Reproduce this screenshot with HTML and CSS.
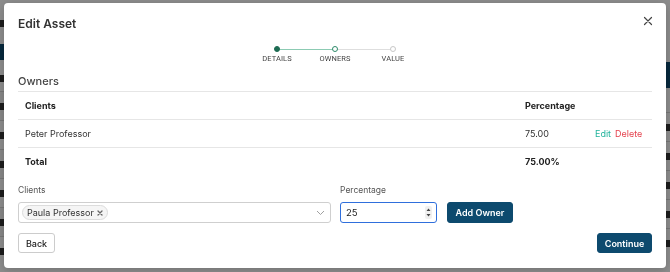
FILE: index.html
```html
<!DOCTYPE html>
<html lang="en">
<head>
<meta charset="utf-8">
<title>Edit Asset</title>
<link rel="stylesheet" href="styles.css">
</head>
<body>
<div class="page">
  <div class="page-left">
    <div class="pl-title"><span class="ink"></span></div>
    <div class="pl-btn"></div>
    <div class="pl-text"><span class="ink"></span></div>
    <div class="pl-rows">
      <div class="pl-row"><span class="ink"></span></div>
      <div class="pl-row"><span class="ink"></span></div>
      <div class="pl-row"><span class="ink"></span></div>
      <div class="pl-row"><span class="ink"></span></div>
      <div class="pl-row"><span class="ink"></span></div>
      <div class="pl-row"><span class="ink"></span></div>
    </div>
  </div>
  <div class="page-right">
    <div class="pr-btn"></div>
    <div class="pr-rows">
      <div class="pr-row"><span class="ink"></span></div>
      <div class="pr-row"><span class="ink"></span></div>
      <div class="pr-row"><span class="ink"></span></div>
      <div class="pr-row"><span class="ink"></span></div>
      <div class="pr-row"><span class="ink"></span></div>
    </div>
  </div>
</div>

<div class="backdrop">
  <div class="modal">
    <div class="modal-head">
      <div class="title">Edit Asset</div>
      <div class="close">
        <svg width="10" height="10" viewBox="0 0 10 10"><path d="M1.5 1.5 L8.5 8.5 M8.5 1.5 L1.5 8.5" stroke="#444" stroke-width="1.2" stroke-linecap="round" fill="none"/></svg>
      </div>
    </div>

    <div class="stepper">
      <div class="step step-done">
        <span class="dot dot-done"></span>
        <span class="step-label">DETAILS</span>
      </div>
      <div class="step step-current">
        <span class="dot dot-current"></span>
        <span class="step-label">OWNERS</span>
      </div>
      <div class="step step-todo">
        <span class="dot dot-todo"></span>
        <span class="step-label">VALUE</span>
      </div>
    </div>

    <div class="section-title">Owners</div>

    <div class="table">
      <div class="row row-head">
        <div class="cell">Clients</div>
        <div class="cell">Percentage</div>
        <div class="cell"></div>
      </div>
      <div class="row">
        <div class="cell">Peter Professor</div>
        <div class="cell">75.00</div>
        <div class="cell actions"><span class="edit">Edit</span><span class="delete">Delete</span></div>
      </div>
      <div class="row row-total">
        <div class="cell">Total</div>
        <div class="cell">75.00%</div>
        <div class="cell"></div>
      </div>
    </div>

    <div class="form-row">
      <div class="field field-clients">
        <label class="label">Clients</label>
        <div class="select">
          <span class="chip">Paula Professor
            <svg width="6" height="6" viewBox="0 0 6 6"><path d="M1 1 L5 5 M5 1 L1 5" stroke="#666" stroke-width="1.3" stroke-linecap="round"/></svg>
          </span>
          <svg class="chevron" width="9" height="6" viewBox="0 0 9 6"><path d="M1 1 L4.5 4.5 L8 1" stroke="#a0a0a0" stroke-width="1" fill="none"/></svg>
        </div>
      </div>
      <div class="field field-pct">
        <label class="label">Percentage</label>
        <div class="num">
          <input class="num-input" type="text" value="25">
          <span class="spinner">
            <svg width="7" height="13" viewBox="0 0 7 13"><path d="M3.5 2.5 L5.5 5 L1.5 5 Z M1.5 8 L5.5 8 L3.5 10.5 Z" fill="#444"/></svg>
          </span>
        </div>
      </div>
      <button class="btn btn-primary btn-add">Add Owner</button>
    </div>

    <div class="footer">
      <button class="btn btn-light">Back</button>
      <button class="btn btn-primary">Continue</button>
    </div>
  </div>
</div>
</body>
</html>
```

FILE: styles.css
```css
html, body {
  margin: 0;
  padding: 0;
}

body {
  width: 670px;
  height: 272px;
  overflow: hidden;
  background: #ffffff;
  font-family: Inter, "Noto Sans", sans-serif;
  color: #333;
}

/* ---------- page behind the dialog ---------- */
.page {
  display: flex;
  justify-content: space-between;
  height: 272px;
}

.ink {
  display: block;
  width: 100%;
  height: 7px;
  background: #333;
}

.page-left {
  width: 26px;
  margin-left: -22px;
  display: flex;
  flex-direction: column;
}

.pl-title {
  margin-top: 20px;
  height: 9px;
}

.pl-btn {
  margin-top: 15px;
  height: 16px;
  background: #0d4a6e;
}

.pl-text {
  margin-top: 15px;
  height: 8px;
}

.pl-rows {
  margin-top: 8px;
}

.pl-row {
  height: 29px;
  box-sizing: border-box;
  padding-top: 11px;
  border-top: 1px solid #d8d8d8;
  background: #f6f6f6;
}

.pl-row:nth-child(even) {
  background: #ffffff;
}

.page-right {
  width: 26px;
  margin-right: -20px;
  display: flex;
  flex-direction: column;
}

.pr-btn {
  margin-top: 62px;
  height: 26px;
  background: #0d4a6e;
}

.pr-rows {
  margin-top: 24px;
}

.pr-row {
  height: 29px;
  box-sizing: border-box;
  padding-top: 11px;
  border-top: 1px solid #d8d8d8;
}

/* ---------- backdrop and dialog ---------- */
.backdrop {
  position: fixed;
  inset: 0;
  background: rgba(0, 0, 0, 0.45);
  display: flex;
  justify-content: center;
  align-items: flex-start;
  padding-top: 3px;
}

.modal {
  width: 662px;
  height: 265px;
  box-sizing: border-box;
  background: #ffffff;
  border-radius: 4px;
  padding: 14px 14px 15px;
  display: flex;
  flex-direction: column;
  box-shadow: 0 2px 10px rgba(0, 0, 0, 0.2);
}

.modal-head {
  display: flex;
  justify-content: space-between;
  align-items: flex-start;
  height: 14px;
}

.title {
  font-size: 12px;
  font-weight: 600;
  line-height: 14px;
  color: #333;
}

.close {
  width: 10px;
  height: 10px;
  margin-top: -1px;
  margin-right: -1px;
  display: flex;
}

/* ---------- stepper ---------- */
.stepper {
  display: flex;
  justify-content: center;
  margin-top: 15px;
}

.step {
  width: 58px;
  display: flex;
  flex-direction: column;
  align-items: center;
  position: relative;
}

.step-done::after,
.step-current::before,
.step-current::after,
.step-todo::before {
  content: "";
  position: absolute;
  top: 2.5px;
  height: 1px;
  width: 29px;
}

.step-done::after {
  right: 0;
  background: #8ccbb3;
}

.step-current::before {
  left: 0;
  background: #8ccbb3;
}

.step-current::after {
  right: 0;
  background: #dedede;
}

.step-todo::before {
  left: 0;
  background: #dedede;
}

.dot {
  position: relative;
  z-index: 1;
  display: block;
  width: 6px;
  height: 6px;
  box-sizing: border-box;
  border-radius: 50%;
  background: #fff;
  border: 1px solid #c8c8c8;
}

.dot-done {
  background: #1d6b52;
  border-color: #1d6b52;
}

.dot-current {
  border: 1.3px solid #2e8a6a;
}

.step-label {
  margin-top: 2px;
  font-family: Roboto, "Noto Sans", sans-serif;
  font-size: 7.5px;
  line-height: 9px;
  color: #444;
  letter-spacing: 0.1px;
}

/* ---------- owners table ---------- */
.section-title {
  margin-top: 11px;
  font-size: 11px;
  font-weight: 500;
  line-height: 14px;
  color: #444;
  padding-bottom: 3px;
  border-bottom: 1px solid #e6e6e6;
}

.row {
  display: grid;
  grid-template-columns: 500px 70px 1fr;
  height: 27px;
  align-items: center;
  border-bottom: 1px solid #e6e6e6;
  font-size: 9px;
  color: #333;
}

.row-total {
  border-bottom: none;
}

.row-head,
.row-total {
  font-weight: 700;
  color: #222;
}

.cell {
  padding-left: 7px;
}

.actions {
  display: flex;
  gap: 4px;
}

.edit {
  color: #22b39c;
}

.delete {
  color: #e5434f;
}

/* ---------- add owner form ---------- */
.form-row {
  display: flex;
  align-items: flex-end;
  gap: 9px;
  margin-top: 10px;
}

.field {
  display: flex;
  flex-direction: column;
}

.field-clients {
  width: 313px;
}

.field-pct {
  width: 97px;
}

.label {
  font-size: 8.5px;
  line-height: 11px;
  color: #555;
  margin-bottom: 6px;
}

.select {
  height: 21px;
  box-sizing: border-box;
  border: 1px solid #cfcfcf;
  border-radius: 3px;
  display: flex;
  align-items: center;
  justify-content: space-between;
  padding: 0 5px 0 3px;
}

.chip {
  display: inline-flex;
  align-items: center;
  gap: 3px;
  height: 15px;
  box-sizing: border-box;
  padding: 0 4px 0 4px;
  border: 1px solid #dcdcdc;
  border-radius: 8px;
  background: #f5f5f5;
  font-size: 9px;
  color: #333;
}

.num {
  height: 21px;
  box-sizing: border-box;
  border: 1.5px solid #2f6fdc;
  border-radius: 3px;
  display: flex;
  align-items: center;
  padding: 0 4px 0 5px;
}

.num-input {
  flex: 1;
  min-width: 0;
  border: none;
  outline: none;
  padding: 0;
  font-family: Inter, "Noto Sans", sans-serif;
  font-size: 9.5px;
  color: #222;
  background: transparent;
}

.spinner {
  display: flex;
  background: #f0f0f0;
  border-radius: 2px;
}

.btn {
  font-family: Inter, "Noto Sans", sans-serif;
  font-size: 9px;
  font-weight: 600;
  height: 20px;
  border-radius: 3px;
  box-sizing: border-box;
  padding: 0 7px;
  cursor: pointer;
}

.btn-primary {
  background: #0d4a6e;
  color: #fff;
  border: 1px solid #0d4a6e;
}

.btn-light {
  background: #fff;
  color: #222;
  border: 1px solid #cccccc;
  font-weight: 500;
  width: 37px;
  padding: 0;
}

.btn-add {
  height: 21px;
  width: 66px;
  padding: 0;
  margin-left: 1px;
}

.footer {
  margin-top: auto;
  display: flex;
  justify-content: space-between;
}

.footer .btn-primary {
  width: 55px;
  padding: 0;
}
```
